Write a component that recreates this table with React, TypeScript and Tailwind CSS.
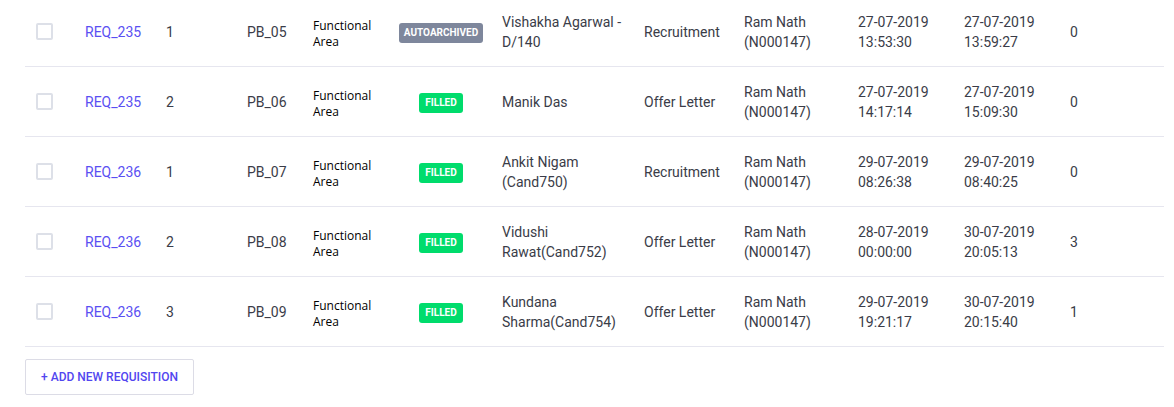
type Row = {
  req: string;
  seq: number;
  pb: string;
  status: 'AUTOARCHIVED' | 'FILLED';
  candidate: string;
  stage: string;
  owner: string;
  created: [string, string];
  updated: [string, string];
  count: number;
};

const rows: Row[] = [
  {
    req: 'REQ_235',
    seq: 1,
    pb: 'PB_05',
    status: 'AUTOARCHIVED',
    candidate: 'Vishakha Agarwal - D/140',
    stage: 'Recruitment',
    owner: 'Ram Nath (N000147)',
    created: ['27-07-2019', '13:53:30'],
    updated: ['27-07-2019', '13:59:27'],
    count: 0,
  },
  {
    req: 'REQ_235',
    seq: 2,
    pb: 'PB_06',
    status: 'FILLED',
    candidate: 'Manik Das',
    stage: 'Offer Letter',
    owner: 'Ram Nath (N000147)',
    created: ['27-07-2019', '14:17:14'],
    updated: ['27-07-2019', '15:09:30'],
    count: 0,
  },
  {
    req: 'REQ_236',
    seq: 1,
    pb: 'PB_07',
    status: 'FILLED',
    candidate: 'Ankit Nigam (Cand750)',
    stage: 'Recruitment',
    owner: 'Ram Nath (N000147)',
    created: ['29-07-2019', '08:26:38'],
    updated: ['29-07-2019', '08:40:25'],
    count: 0,
  },
  {
    req: 'REQ_236',
    seq: 2,
    pb: 'PB_08',
    status: 'FILLED',
    candidate: 'Vidushi Rawat(Cand752)',
    stage: 'Offer Letter',
    owner: 'Ram Nath (N000147)',
    created: ['28-07-2019', '00:00:00'],
    updated: ['30-07-2019', '20:05:13'],
    count: 3,
  },
  {
    req: 'REQ_236',
    seq: 3,
    pb: 'PB_09',
    status: 'FILLED',
    candidate: 'Kundana Sharma(Cand754)',
    stage: 'Offer Letter',
    owner: 'Ram Nath (N000147)',
    created: ['29-07-2019', '19:21:17'],
    updated: ['30-07-2019', '20:15:40'],
    count: 1,
  },
];

function StatusBadge({ status }: { status: Row['status'] }) {
  const tone =
    status === 'FILLED' ? 'bg-[#00dc6c] px-[6px]' : 'bg-[#7e879c] px-[5px]';
  return (
    <span
      className={`mt-[2px] inline-flex h-[20px] items-center rounded-[3px] text-[10px] font-bold leading-none text-white ${tone}`}
    >
      {status}
    </span>
  );
}

export default function App() {
  return (
    <div
      className="w-[1174px] h-[407px] overflow-hidden bg-white text-[14px] text-[#3a3c48]"
      style={{ fontFamily: 'Roboto, "Liberation Sans", sans-serif' }}
    >
      <div className="ml-[25px] mr-[10px] -mt-[3px]">
        {rows.map((r, i) => (
          <div
            key={i}
            className="flex h-[70px] items-center border-b border-[#e6e6ef] leading-[20px]"
          >
            {/* Checkbox */}
            <div className="w-[60px] shrink-0 pl-[11px]">
              <span className="block h-[17px] w-[17px] rounded-[2px] border-2 border-[#dde0e8] bg-white" />
            </div>
            <div className="w-[81px] shrink-0 text-[#5a4ff2]">{r.req}</div>
            <div className="w-[81px] shrink-0">{r.seq}</div>
            <div className="w-[66px] shrink-0">{r.pb}</div>
            <div
              className="w-[86px] shrink-0 pt-[4px] pr-[16px] text-[12px] leading-[16px] text-black"
              style={{ fontFamily: '"Open Sans", "Noto Sans", sans-serif' }}
            >
              Functional Area
            </div>
            <div className="flex w-[84px] shrink-0 justify-center">
              <StatusBadge status={r.status} />
            </div>
            <div className="w-[161px] shrink-0 pl-[19px] pr-[12px]">{r.candidate}</div>
            <div className="w-[100px] shrink-0">{r.stage}</div>
            <div className="w-[114px] shrink-0 pr-[30px]">{r.owner}</div>
            <div className="w-[106px] shrink-0 pr-[20px]">
              {r.created[0]}
              <br />
              {r.created[1]}
            </div>
            <div className="w-[106px] shrink-0 pr-[20px]">
              {r.updated[0]}
              <br />
              {r.updated[1]}
            </div>
            <div className="flex-1">{r.count}</div>
          </div>
        ))}

        <button className="mt-[12px] h-[36px] w-[169px] rounded-[2px] border border-[#dcdce6] bg-white text-[12px] font-medium text-[#5246f0]">
          + ADD NEW REQUISITION
        </button>
      </div>
    </div>
  );
}
